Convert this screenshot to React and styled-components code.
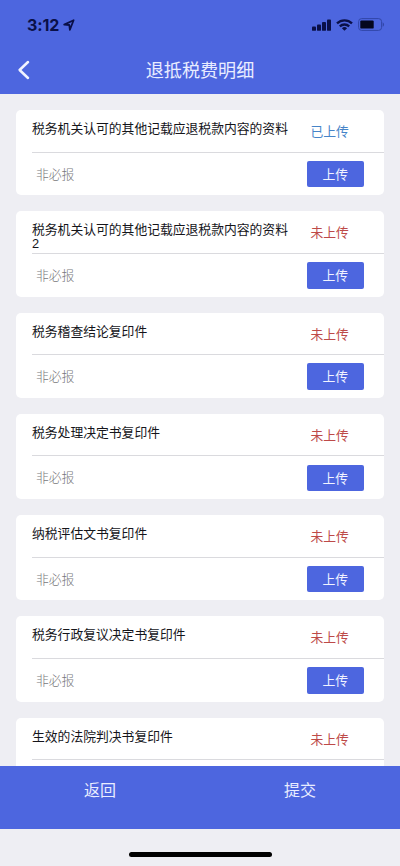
import React from 'react'
import styled, { createGlobalStyle } from 'styled-components';

const colors = {
    main: '#4d66df',
    page: '#eeeef3',
    done: '#4684c8',
    missing: '#bd4a48',
    ink: '#0a1048',
}

const GlobalStyle = createGlobalStyle`
    * {
        box-sizing: border-box;
    }
    body {
        margin: 0;
        background-color: ${colors.page};
        font-family: "Liberation Sans", "Noto Sans CJK SC", sans-serif;
    }
`

const Screen = styled.div`
    display: flex;
    flex-direction: column;
    height: 866px;
    overflow: hidden;
    background-color: ${colors.page};
`

const Header = styled.header`
    flex: none;
    height: 94px;
    background-color: ${colors.main};
`

const StatusBar = styled.div`
    display: flex;
    justify-content: space-between;
    align-items: center;
    height: 48px;
    padding: 1px 15px 0 27px;
    color: ${colors.ink};
`

const Clock = styled.div`
    display: flex;
    align-items: center;
    gap: 4px;
    font-family: Inter, sans-serif;
    font-size: 16px;
    font-weight: 700;
    letter-spacing: -0.1px;
`

const StatusIcons = styled.div`
    display: flex;
    align-items: center;
    gap: 5px;

    svg {
        display: block;
    }
`

const NavBar = styled.div`
    display: grid;
    grid-template-columns: 48px 1fr 48px;
    align-items: center;
    height: 46px;
    padding-bottom: 1px;
`

const BackButton = styled.button`
    display: flex;
    padding: 0 0 1px 17px;
    border: 0;
    background: none;
`

const PageTitle = styled.h1`
    margin: 0;
    color: #e9edff;
    font-size: 18.1px;
    font-weight: 400;
    line-height: 24px;
    text-align: center;
`

const List = styled.main`
    flex: 1;
    min-height: 0;
    display: flex;
    flex-direction: column;
    gap: 16px;
    padding: 16px 16px 0;
    overflow: hidden;
`

const Card = styled.section`
    flex: none;
    height: 85.25px;
    padding-left: 16px;
    border-radius: 5px;
    background-color: #ffffff;
`

const CardTop = styled.div`
    display: flex;
    height: 42.5px;
    border-bottom: 1px solid #dadade;
`

const CardTitle = styled.div`
    width: 262px;
    padding-top: 12px;
    color: #15151a;
    font-size: 12.8px;
    line-height: 14px;
`

const Status = styled.div`
    padding: 14px 0 0 16.5px;
    color: ${props => props.$done ? colors.done : colors.missing};
    font-size: 12.8px;
    line-height: 16px;
`

const CardBottom = styled.div`
    display: flex;
    justify-content: space-between;
    align-items: center;
    height: 43px;
    padding: 0 20px 0 4px;
`

const Optional = styled.span`
    padding-bottom: 2px;
    color: #77777a;
    font-size: 12.8px;
    font-weight: 300;
`

const UploadButton = styled.button`
    width: 57.5px;
    height: 26.5px;
    padding: 1px 0 0;
    border: 0;
    border-radius: 2px;
    background-color: ${colors.main};
    color: #f1f3ff;
    font-family: inherit;
    font-size: 12.8px;
    line-height: 25.5px;
`

const Footer = styled.footer`
    flex: none;
    display: grid;
    grid-template-columns: 1fr 1fr;
    height: 63.5px;
    background-color: ${colors.main};
`

const FooterButton = styled.button`
    padding: 0 0 17px;
    border: 0;
    background: none;
    color: #e9edff;
    font-family: inherit;
    font-size: 16px;
`

const HomeArea = styled.div`
    flex: none;
    display: flex;
    justify-content: center;
    align-items: flex-start;
    height: 37px;
    padding-top: 22.5px;
`

const HomeIndicator = styled.div`
    width: 143px;
    height: 5.5px;
    border-radius: 3px;
    background-color: #000000;
`

const items = [
    { title: '税务机关认可的其他记载应退税款内容的资料', done: true },
    { title: '税务机关认可的其他记载应退税款内容的资料2' },
    { title: '税务稽查结论复印件' },
    { title: '税务处理决定书复印件' },
    { title: '纳税评估文书复印件' },
    { title: '税务行政复议决定书复印件' },
    { title: '生效的法院判决书复印件', collapsed: true },
]

const LocationIcon = () => (
    <svg width="12" height="12" viewBox="0 0 12 12">
        <path d="M1.2 5.6 10.6 1.2 6.9 10.8 6.3 6Z" fill="none" stroke={colors.ink} strokeWidth="1.8" strokeLinejoin="round" />
    </svg>
)

const SignalIcon = () => (
    <svg width="19" height="12" viewBox="0 0 19 12" fill={colors.ink}>
        <rect x="0" y="7.6" width="4" height="4.2" rx="0.9" />
        <rect x="5" y="5.4" width="4" height="6.4" rx="0.9" />
        <rect x="10" y="3" width="4" height="8.8" rx="0.9" />
        <rect x="15" y="0.4" width="4" height="11.4" rx="0.9" />
    </svg>
)

const WifiIcon = () => (
    <svg width="17" height="12" viewBox="0 0 17 12" fill="none" stroke={colors.ink} strokeWidth="2.3">
        <path d="M1 4.4a10.8 10.8 0 0 1 15 0" />
        <path d="M3.8 7.4a6.8 6.8 0 0 1 9.4 0" />
        <path d="M8.5 11.8 5.9 9.2a3.8 3.8 0 0 1 5.2 0Z" fill={colors.ink} stroke="none" />
    </svg>
)

const BatteryIcon = () => (
    <svg width="27" height="13" viewBox="0 0 27 13">
        <rect x="0.6" y="0.6" width="23" height="11.8" rx="3" fill="none" stroke="#3146a8" />
        <rect x="2.3" y="2.4" width="13.4" height="8.2" rx="1.2" fill="#04071f" />
        <path d="M24.7 4.2c1.8.8 1.8 3.8 0 4.6Z" fill="#3146a8" />
    </svg>
)

const BackIcon = () => (
    <svg width="13" height="20" viewBox="0 0 13 20">
        <path d="M11 2 2.6 10 11 18" fill="none" stroke="#f1f3ff" strokeWidth="2.5" strokeLinecap="round" strokeLinejoin="round" />
    </svg>
)

const UploadCard = ({ title, done, collapsed }) => {

    return(
        <Card>
            <CardTop>
                <CardTitle>{title}</CardTitle>
                <Status $done={done}>{done ? '已上传' : '未上传'}</Status>
            </CardTop>
            {!collapsed && (
                <CardBottom>
                    <Optional>非必报</Optional>
                    <UploadButton>上传</UploadButton>
                </CardBottom>
            )}
        </Card>
    )

}

const App = () => {

    return(
        <Screen>
            <GlobalStyle />
            <Header>
                <StatusBar>
                    <Clock>3:12<LocationIcon /></Clock>
                    <StatusIcons>
                        <SignalIcon />
                        <WifiIcon />
                        <BatteryIcon />
                    </StatusIcons>
                </StatusBar>
                <NavBar>
                    <BackButton aria-label="返回"><BackIcon /></BackButton>
                    <PageTitle>退抵税费明细</PageTitle>
                </NavBar>
            </Header>
            <List>
                {items.map(item => <UploadCard key={item.title} {...item} />)}
            </List>
            <Footer>
                <FooterButton>返回</FooterButton>
                <FooterButton>提交</FooterButton>
            </Footer>
            <HomeArea>
                <HomeIndicator />
            </HomeArea>
        </Screen>
    )

}

export default App
